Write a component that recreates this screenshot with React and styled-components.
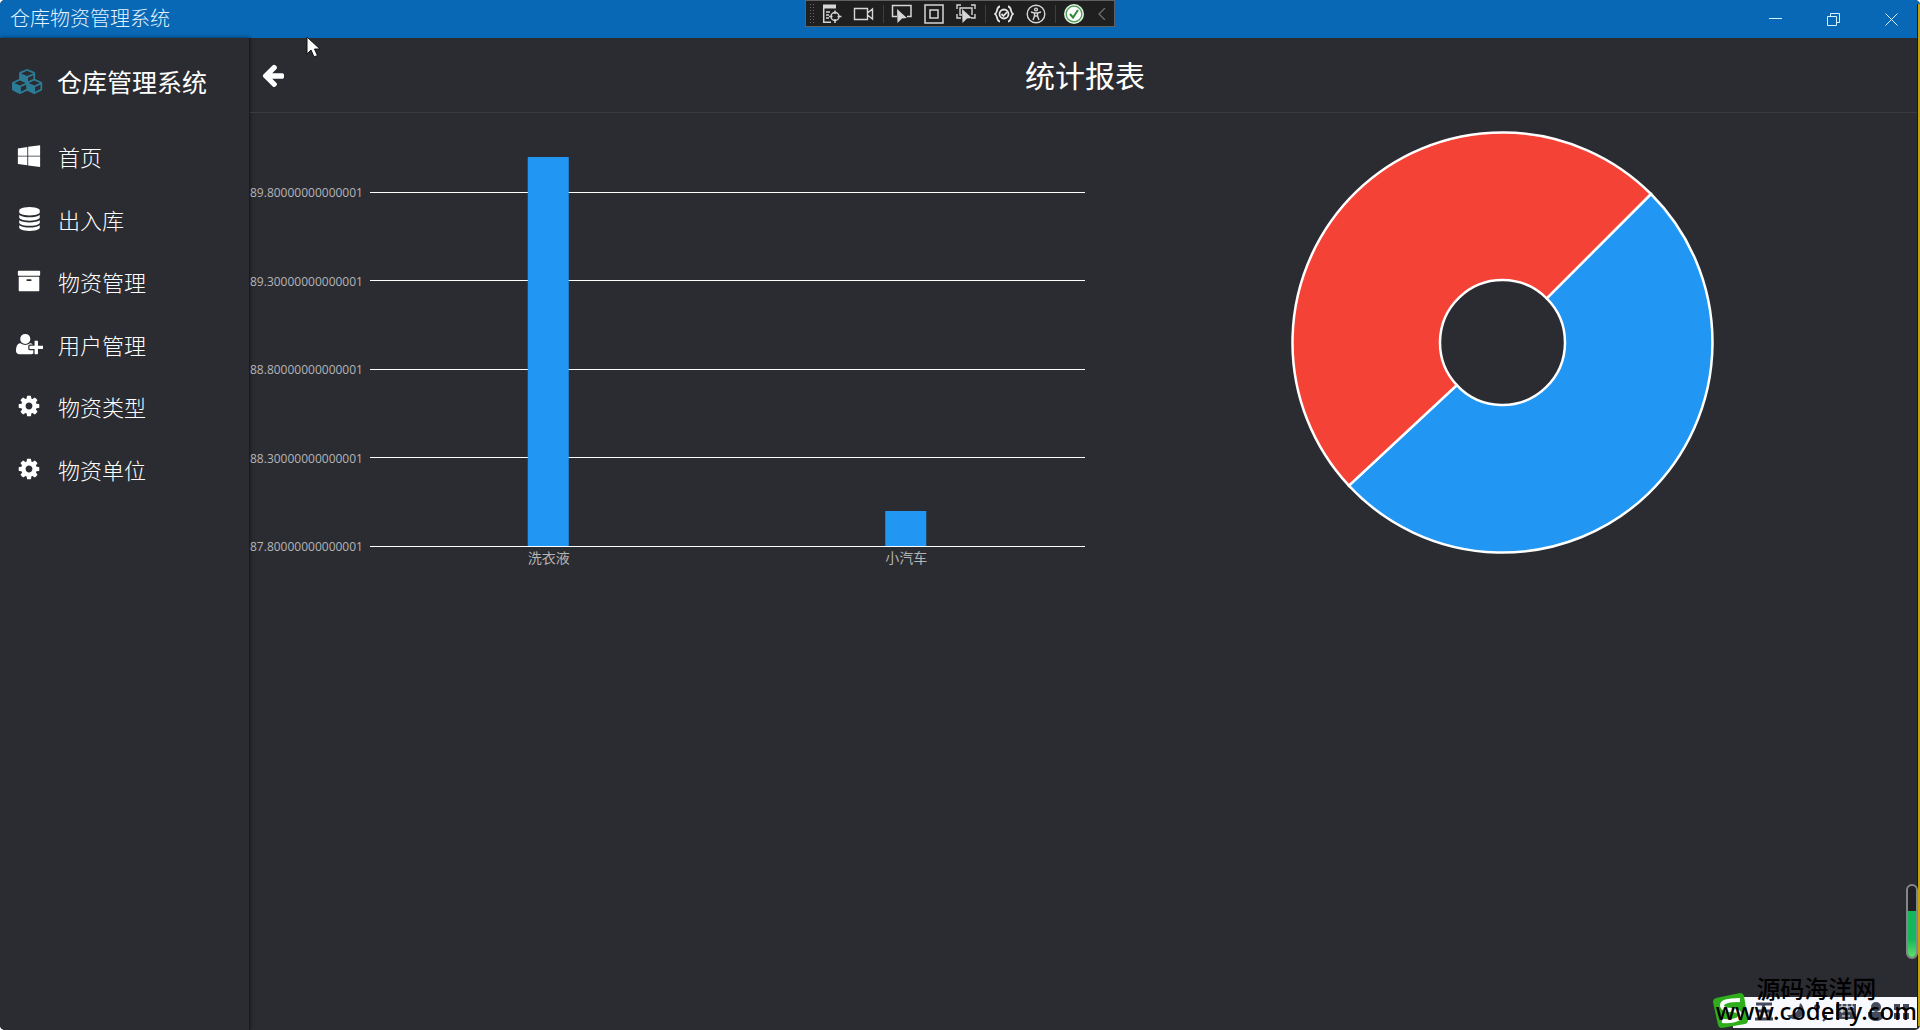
import React from 'react';
import styled, { createGlobalStyle } from 'styled-components';

const GlobalStyle = createGlobalStyle`
	* {
		box-sizing: border-box;
		margin: 0;
		padding: 0;
	}
	body {
		background: #fff;
		font-family: 'Open Sans', 'Noto Sans CJK SC', sans-serif;
		color: #fff;
	}
	button {
		border: 0;
		background: none;
		color: inherit;
		font: inherit;
		cursor: pointer;
	}
`;

const menu = [
	{ label: '首页', icon: 'windows' },
	{ label: '出入库', icon: 'database' },
	{ label: '物资管理', icon: 'archive' },
	{ label: '用户管理', icon: 'userPlus' },
	{ label: '物资类型', icon: 'cog' },
	{ label: '物资单位', icon: 'cog' },
];

const stock = [
	{ name: '洗衣液', value: 90, color: '#2196f3' },
	{ name: '小汽车', value: 88, color: '#f44336' },
];

const ticks = [
	'89.80000000000001',
	'89.30000000000001',
	'88.80000000000001',
	'88.30000000000001',
	'87.80000000000001',
];

const glyphs = {
	windows: {
		w: 1792,
		d: 'M65 330L770 222V870H65zM835 212L1727 95V870H835zM65 935H770V1590L65 1500zM835 935H1727V1715L835 1600z',
	},
	database: {
		w: 1536,
		d: 'M768 768q237 0 443-43t325-127v170q0 69-103 128t-280 93.5-385 34.5-385-34.5-280-93.5-103-128v-170q119 84 325 127t443 43zm0 768q237 0 443-43t325-127v170q0 69-103 128t-280 93.5-385 34.5-385-34.5-280-93.5-103-128v-170q119 84 325 127t443 43zm0-384q237 0 443-43t325-127v170q0 69-103 128t-280 93.5-385 34.5-385-34.5-280-93.5-103-128v-170q119 84 325 127t443 43zm0-1152q208 0 385 34.5t280 93.5 103 128v128q0 69-103 128t-280 93.5-385 34.5-385-34.5-280-93.5-103-128v-128q0-69 103-128t280-93.5 385-34.5z',
	},
	archive: {
		w: 1792,
		d: 'M1088 832q0-26-19-45t-45-19h-256q-26 0-45 19t-19 45 19 45 45 19h256q26 0 45-19t19-45zm576-192v960q0 26-19 45t-45 19h-1408q-26 0-45-19t-19-45v-960q0-26 19-45t45-19h1408q26 0 45 19t19 45zm64-448v256q0 26-19 45t-45 19h-1536q-26 0-45-19t-19-45v-256q0-26 19-45t45-19h1536q26 0 45 19t19 45z',
	},
	userPlus: {
		w: 2048,
		d: 'M704 896q-159 0-271.5-112.5t-112.5-271.5 112.5-271.5 271.5-112.5 271.5 112.5 112.5 271.5-112.5 271.5-271.5 112.5zm960 128h352q13 0 22.5 9.5t9.5 22.5v192q0 13-9.5 22.5t-22.5 9.5h-352v352q0 13-9.5 22.5t-22.5 9.5h-192q-13 0-22.5-9.5t-9.5-22.5v-352h-352q-13 0-22.5-9.5t-9.5-22.5v-192q0-13 9.5-22.5t22.5-9.5h352v-352q0-13 9.5-22.5t22.5-9.5h192q13 0 22.5 9.5t9.5 22.5v352zm-736 224q0 52 38 90t90 38h256v238q-68 50-171 50h-874q-121 0-194-69t-73-190q0-53 3.5-103.5t14-109 26.5-108.5 43-97.5 62-81 85.5-53.5 111.5-20q19 0 39 17 79 61 154.5 91.5t164.5 30.5 164.5-30.5 154.5-91.5q20-17 39-17 132 0 217 96h-223q-52 0-90 38t-38 90v192z',
	},
	cog: {
		w: 1792,
		d: 'M1152 896q0-106-75-181t-181-75-181 75-75 181 75 181 181 75 181-75 75-181zm512-109v222q0 12-8 23t-20 13l-185 28q-19 54-39 91 35 50 107 138 10 12 10 25t-9 23q-27 37-99 108t-94 71q-12 0-26-9l-138-108q-44 23-91 38-16 136-29 186-7 28-36 28h-222q-14 0-24.5-8.5t-11.5-21.5l-28-184q-49-16-90-37l-141 107q-10 9-25 9-14 0-25-11-126-114-165-168-7-10-7-23 0-12 8-23 15-21 51-66.5t54-70.5q-27-50-41-99l-183-27q-13-2-21-12.5t-8-23.5v-222q0-12 8-23t19-13l186-28q14-46 39-92-40-57-107-138-10-12-10-24 0-10 9-23 26-36 98.5-107.5t94.5-71.5q13 0 26 10l138 107q44-23 91-38 16-136 29-186 7-28 36-28h222q14 0 24.5 8.5t11.5 21.5l28 184q49 16 90 37l142-107q9-9 24-9 13 0 25 10 129 119 165 170 7 8 7 22 0 12-8 23-15 21-51 66.5t-54 70.5q26 50 41 98l183 28q13 2 21 12.5t8 23.5z',
	},
	cubes: {
		w: 2304,
		d: 'M640 1632l384-192v-314l-384 164v342zm-64-454l404-173-404-173-404 173zm1088 454l384-192v-314l-384 164v342zm-64-454l404-173-404-173-404 173zm-448-293l384-165v-266l-384 164v267zm-64-379l441-189-441-189-441 189zm1088 518v416q0 36-19 67t-52 47l-448 224q-25 14-57 14t-57-14l-448-224q-4-2-7-4-2 2-7 4l-448 224q-25 14-57 14t-57-14l-448-224q-33-16-52-47t-19-67v-416q0-38 21.5-70t56.5-48l434-186v-400q0-38 21.5-70t56.5-48l448-192q23-10 50-10t50 10l448 192q35 16 56.5 48t21.5 70v400l434 186q36 16 57 48t21 70z',
	},
	arrowLeft: {
		w: 1536,
		d: 'M1536 896v128q0 53-32.5 90.5t-84.5 37.5h-704l293 294q38 36 38 90t-38 90l-75 76q-37 37-90 37-52 0-91-37l-651-652q-37-37-37-90 0-52 37-91l651-650q38-38 91-38 52 0 90 38l75 74q38 38 38 91t-38 91l-293 293h704q52 0 84.5 37.5t32.5 90.5z',
	},
};

const Glyph = ({ name, size = 24 }) => (
	<svg
		height={size}
		width={Math.round((size * glyphs[name].w) / 1792)}
		viewBox={`0 0 ${glyphs[name].w} 1792`}
		fill="currentColor"
		aria-hidden="true"
	>
		<path d={glyphs[name].d} />
	</svg>
);

const DebugToolbar = () => (
	<Toolbar>
		<Grip />
		<Tool aria-label="实时可视化树">
			<svg width="20" height="20" viewBox="0 0 20 20" fill="none" stroke="#d6d6d6" strokeWidth="1.5">
				<path d="M1 2.5h13" strokeWidth="4" />
				<path d="M1.7 4v14.3H9M4 8h4M4 11h3M4 14h3" />
				<circle cx="13" cy="12.5" r="4" />
				<path d="M13 6.5v3.5M13 15v4M7 12.5h3.5M15.5 12.5h4" />
			</svg>
		</Tool>
		<Tool aria-label="录制">
			<svg width="22" height="20" viewBox="0 0 22 20" fill="none" stroke="#d6d6d6" strokeWidth="1.4">
				<path d="M1.5 4.5h13v11h-13zM14.5 9l5-4v10l-5-4" />
			</svg>
		</Tool>
		<Divider />
		<Tool aria-label="选择元素">
			<svg width="22" height="20" viewBox="0 0 22 20" fill="none" stroke="#d6d6d6" strokeWidth="1.5">
				<path d="M6 12.5H1.5v-11h18.5v11h-4" />
				<path d="M6 5l10 9-5 .5L6.500 19z" fill="#d6d6d6" stroke="none" />
			</svg>
		</Tool>
		<Tool aria-label="显示布局装饰器">
			<svg width="20" height="20" viewBox="0 0 20 20" fill="none" stroke="#d6d6d6" strokeWidth="1.5">
				<path d="M1 1h18v18H1zM6 6h8v8H6z" />
			</svg>
		</Tool>
		<Tool aria-label="跟踪焦点元素">
			<svg width="20" height="20" viewBox="0 0 20 20" fill="none" stroke="#d6d6d6" strokeWidth="1.4">
				<path d="M1 5V1h4M15 1h4v4M1 10v4h4M19 10v4h-4M6 11H4V4h12v7" />
				<path d="M6 5l10 9-5 .5L6.500 19z" fill="#d6d6d6" stroke="none" />
			</svg>
		</Tool>
		<Divider />
		<Tool aria-label="绑定失败">
			<svg width="20" height="20" viewBox="0 0 20 20" fill="none" stroke="#e6e6e6" strokeWidth="1.8">
				<path d="M6 2.500C2 2.500 4 9 1 10c3 1 1 7.500 5 7.500M14 2.500c4 0 2 6.500 5 7.500-3 1-1 7.500-5 7.500" />
				<circle cx="10" cy="10" r="4.5" />
				<path d="M7.5 10l2 2 3.5-4" />
			</svg>
		</Tool>
		<Tool aria-label="辅助功能">
			<svg width="20" height="20" viewBox="0 0 20 20" fill="none" stroke="#d6d6d6" strokeWidth="1.4">
				<circle cx="10" cy="10" r="8.8" />
				<circle cx="10" cy="5.5" r="1.4" />
				<path d="M5 8l3.5 1v3L7 16M15 8l-3.5 1v3l1.5 4M8.500 9h3M8.500 12h3" />
			</svg>
		</Tool>
		<Divider />
		<Tool aria-label="热重载">
			<svg width="20" height="20" viewBox="0 0 20 20" fill="none">
				<circle cx="10" cy="10" r="10" fill="#dff0df" />
				<circle cx="10" cy="10" r="7.8" fill="#fff" stroke="#4a9b52" strokeWidth="1.2" />
				<path d="M6 10l3 3.5L14 6" stroke="#2d8a38" strokeWidth="2" />
			</svg>
		</Tool>
		<Tool aria-label="收起">
			<svg width="8" height="12" viewBox="0 0 8 12" fill="none" stroke="#707070" strokeWidth="1.3">
				<path d="M7 0L1 6l6 6" />
			</svg>
		</Tool>
	</Toolbar>
);

const BarChart = () => {
	const min = 87.8;
	const unit = 177; // px per 1.0 of quantity
	const base = 389;
	return (
		<ChartGrid>
			<Axis>
				{ticks.map((tick) => (
					<li key={tick}>{tick}</li>
				))}
			</Axis>
			<Plot>
				<svg width="100%" height="390" role="img" aria-label="库存数量">
					{ticks.map((tick, i) => (
						<rect key={tick} x="0" y={Math.floor(35 + i * 88.5)} width="100%" height="1" fill="#fff" />
					))}
					{stock.map((item, i) => {
						const height = Math.round((item.value - min) * unit);
						return (
							<rect
								key={item.name}
								x={`${25 + i * 50}%`}
								y={base - height}
								width="41"
								height={height}
								transform="translate(-21)"
								fill="#2196f3"
							/>
						);
					})}
				</svg>
				<Categories>
					{stock.map((item) => (
						<li key={item.name}>{item.name}</li>
					))}
				</Categories>
			</Plot>
		</ChartGrid>
	);
};

const Donut = () => {
	const total = stock.reduce((sum, item) => sum + item.value, 0);
	const outer = 210;
	const inner = 62.5;
	const point = (r, deg) => {
		const a = (deg * Math.PI) / 180;
		return `${211.5 + r * Math.sin(a)} ${211.5 - r * Math.cos(a)}`;
	};
	let start = 45;
	return (
		<svg width="423" height="423" viewBox="0 0 423 423" role="img" aria-label="库存占比">
			{stock.map((item) => {
				const from = start;
				const to = start + (item.value / total) * 360;
				const large = to - from > 180 ? 1 : 0;
				start = to;
				return (
					<path
						key={item.name}
						d={`M${point(outer, from)}A${outer} ${outer} 0 ${large} 1 ${point(outer, to)}L${point(inner, to)}A${inner} ${inner} 0 ${large} 0 ${point(inner, from)}z`}
						fill={item.color}
						stroke="#fff"
						strokeWidth="2.5"
					/>
				);
			})}
		</svg>
	);
};

const App = () => {
	return (
		<Window>
			<GlobalStyle />
			<TitleBar>
				<span>仓库物资管理系统</span>
				<DebugToolbar />
				<WindowButtons>
					<button aria-label="最小化">
						<svg width="13" height="13" stroke="#d5f2ff" fill="none">
							<path d="M0 5.5h13" />
						</svg>
					</button>
					<button aria-label="还原">
						<svg width="13" height="13" stroke="#d5f2ff" fill="none">
							<path d="M.5 3.5h9v9h-9zM3.5 3V.5h9v9H10" />
						</svg>
					</button>
					<button aria-label="关闭">
						<svg width="13" height="13" stroke="#d5f2ff" fill="none">
							<path d="M.5.5l12 12M12.5.5l-12 12" />
						</svg>
					</button>
				</WindowButtons>
			</TitleBar>
			<Body>
				<Sidebar>
					<Brand>
						<Glyph name="cubes" size={25} />
						<h2>仓库管理系统</h2>
					</Brand>
					<Menu>
						{menu.map((item) => (
							<MenuLink href="#" key={item.label}>
								<IconSlot>
									<Glyph name={item.icon} />
								</IconSlot>
								{item.label}
							</MenuLink>
						))}
					</Menu>
				</Sidebar>
				<Main>
					<PageHeader>
						<button aria-label="返回">
							<Glyph name="arrowLeft" size={26} />
						</button>
						<h1>统计报表</h1>
					</PageHeader>
					<Charts>
						<BarChart />
						<DonutPanel>
							<Donut />
						</DonutPanel>
					</Charts>
				</Main>
			</Body>

			<DesktopEdge />
			<Gauge>
				<span />
			</Gauge>
			<ImeBar>
				<svg width="204" height="35" viewBox="0 0 204 35" aria-hidden="true">
					<path d="M20 4h184v31H20z" fill="#f8faff" />
					<path d="M3 5L27 0q3 0 4 3l4 24q0 3-3 4L9 35q-3 0-4-3L0 9q0-3 3-4z" fill="#2fae1c" />
					<path d="M27 7Q8 7 9 13q1 4 10 4 9 1 8 6-1 6-18 5" fill="none" stroke="#fff" strokeWidth="4" />
					<g fill="none" stroke="#454b5d" strokeWidth="3">
						<path d="M43 11h16M42 26h18M51 11l-3 15M44 18h13v8" />
						<path d="M104 12a2 2 0 1 0 .1 0M113 22v3l-3 3" strokeWidth="2" />
					</g>
					<g fill="#454b5d">
						<path d="M87 10a9 9 0 1 1-13 12q11 1 13-12z" />
						<path d="M123 11h20v15h-20z" />
						<circle cx="163" cy="14" r="5" />
						<path d="M155 19h16v4q-2 5-8 5t-8-5z" />
						<path d="M181 11h6v6h-6zM190 11h6v6h-6zM181 20h6v6h-6zM190 20h6v6h-6z" />
					</g>
					<path d="M125 14h16M125 18h16M129 23h8M129 11v9M134 11v9M139 11v9" stroke="#f8faff" />
				</svg>
			</ImeBar>
			<Watermark>
				<p>源码海洋网</p>
				<p className="site">www.codehy.com</p>
			</Watermark>
			<Pointer width="16" height="24" viewBox="0 0 16 24" aria-hidden="true">
				<path d="M1 1v17l4-4 3 7 3.5-1.5-3-6.5H14z" fill="#fff" stroke="#111" />
			</Pointer>
		</Window>
	);
};

export default App;

const Window = styled.div`
	position: relative;
	display: flex;
	flex-direction: column;
	min-height: 100vh;
	overflow: hidden;
	border-radius: 5px;
	background: #2b2c31;
`;

const TitleBar = styled.header`
	display: flex;
	align-items: center;
	justify-content: space-between;
	height: 38px;
	padding-left: 10px;
	background: #0868b5;
	color: #e2f3ff;
	font-size: 20px;
	font-weight: 300;
	line-height: 36px;
`;

const Toolbar = styled.div`
	position: absolute;
	top: 0;
	left: 50%;
	transform: translateX(-50%);
	display: flex;
	align-items: center;
	width: 310px;
	height: 27px;
	padding-left: 3px;
	border: 1px solid #5e6062;
	background: #1f1f20;
`;

const Grip = styled.span`
	width: 7px;
	height: 21px;
	background: radial-gradient(#68686a 1px, transparent 1px) 0 0 / 3px 3px;
`;

const Tool = styled.button`
	display: flex;
	align-items: center;
	justify-content: center;
	width: 32px;
	height: 25px;
	&:last-child {
		flex: 1;
	}
`;

const Divider = styled.span`
	width: 1px;
	height: 18px;
	margin: 0 2px 0 3px;
	background: #3e3e40;
`;

const WindowButtons = styled.div`
	display: flex;
	button {
		display: flex;
		align-items: center;
		justify-content: center;
		width: 58px;
		height: 38px;
	}
`;

const Body = styled.div`
	display: flex;
	flex: 1;
`;

const Sidebar = styled.aside`
	width: 250px;
	border-right: 1px solid #1b1b1e;
	background: #2b2c31;
	box-shadow: 0 0 4px rgba(0, 0, 0, 0.6);
`;

const Brand = styled.div`
	display: flex;
	align-items: center;
	gap: 13px;
	height: 88px;
	padding: 0 0 2px 12px;
	color: #2c7c97;
	h2 {
		color: #fff;
		font-size: 25px;
		font-weight: 400;
	}
`;

const Menu = styled.nav`
	display: grid;
	grid-template-rows: repeat(6, 1fr);
	height: 375px;
`;

const MenuLink = styled.a`
	display: flex;
	align-items: center;
	gap: 14px;
	padding: 0 0 2px 14px;
	color: #fff;
	font-size: 22px;
	font-weight: 300;
	text-decoration: none;
`;

const IconSlot = styled.span`
	display: flex;
	justify-content: center;
	width: 30px;
`;

const Main = styled.main`
	flex: 1;
	min-width: 0;
`;

const PageHeader = styled.div`
	display: grid;
	grid-template-columns: 46px 1fr 46px;
	align-items: center;
	height: 75px;
	border-bottom: 1px solid #3a3b3f;
	button {
		display: flex;
		justify-content: center;
	}
	h1 {
		padding-bottom: 2px;
		font-size: 30px;
		font-weight: 400;
		text-align: center;
	}
`;

const Charts = styled.section`
	display: grid;
	grid-template-columns: 1fr 1fr;
`;

const ChartGrid = styled.div`
	display: flex;
	padding-top: 44px;
`;

const Axis = styled.ul`
	display: flex;
	flex-direction: column;
	justify-content: space-between;
	width: 120px;
	height: 398px;
	padding-top: 28px;
	color: #b4b4b6;
	font-size: 12px;
	line-height: 16px;
	list-style: none;
`;

const Plot = styled.div`
	flex: 1;
	svg {
		display: block;
	}
`;

const Categories = styled.ul`
	display: grid;
	grid-template-columns: 1fr 1fr;
	color: #b4b4b6;
	font-size: 14px;
	line-height: 22px;
	list-style: none;
	text-align: center;
`;

const DonutPanel = styled.div`
	display: flex;
	justify-content: center;
	padding-top: 18px;
`;

const DesktopEdge = styled.div`
	position: absolute;
	top: 4px;
	right: 0;
	bottom: 4px;
	width: 3px;
	border-left: 1px solid #17181a;
	background: #c0a20c;
`;

const Gauge = styled.div`
	position: absolute;
	right: 2px;
	bottom: 71px;
	display: flex;
	align-items: flex-end;
	width: 12px;
	height: 75px;
	border: 2px solid #85868a;
	border-radius: 6px;
	background: #1f2024;
	span {
		width: 100%;
		height: 46px;
		border-radius: 0 0 4px 4px;
		background: linear-gradient(#12b85a 60%, #62dc6c);
	}
`;

const ImeBar = styled.div`
	position: absolute;
	right: 3px;
	bottom: 2px;
	display: flex;
`;

const Watermark = styled.div`
	position: absolute;
	right: 3px;
	bottom: 8px;
	color: #000;
	font-size: 24px;
	font-weight: 500;
	line-height: 22px;
	text-align: center;
	.site {
		font-family: 'Noto Sans', sans-serif;
	}
`;

const Pointer = styled.svg`
	position: absolute;
	top: 36px;
	left: 306px;
`;
